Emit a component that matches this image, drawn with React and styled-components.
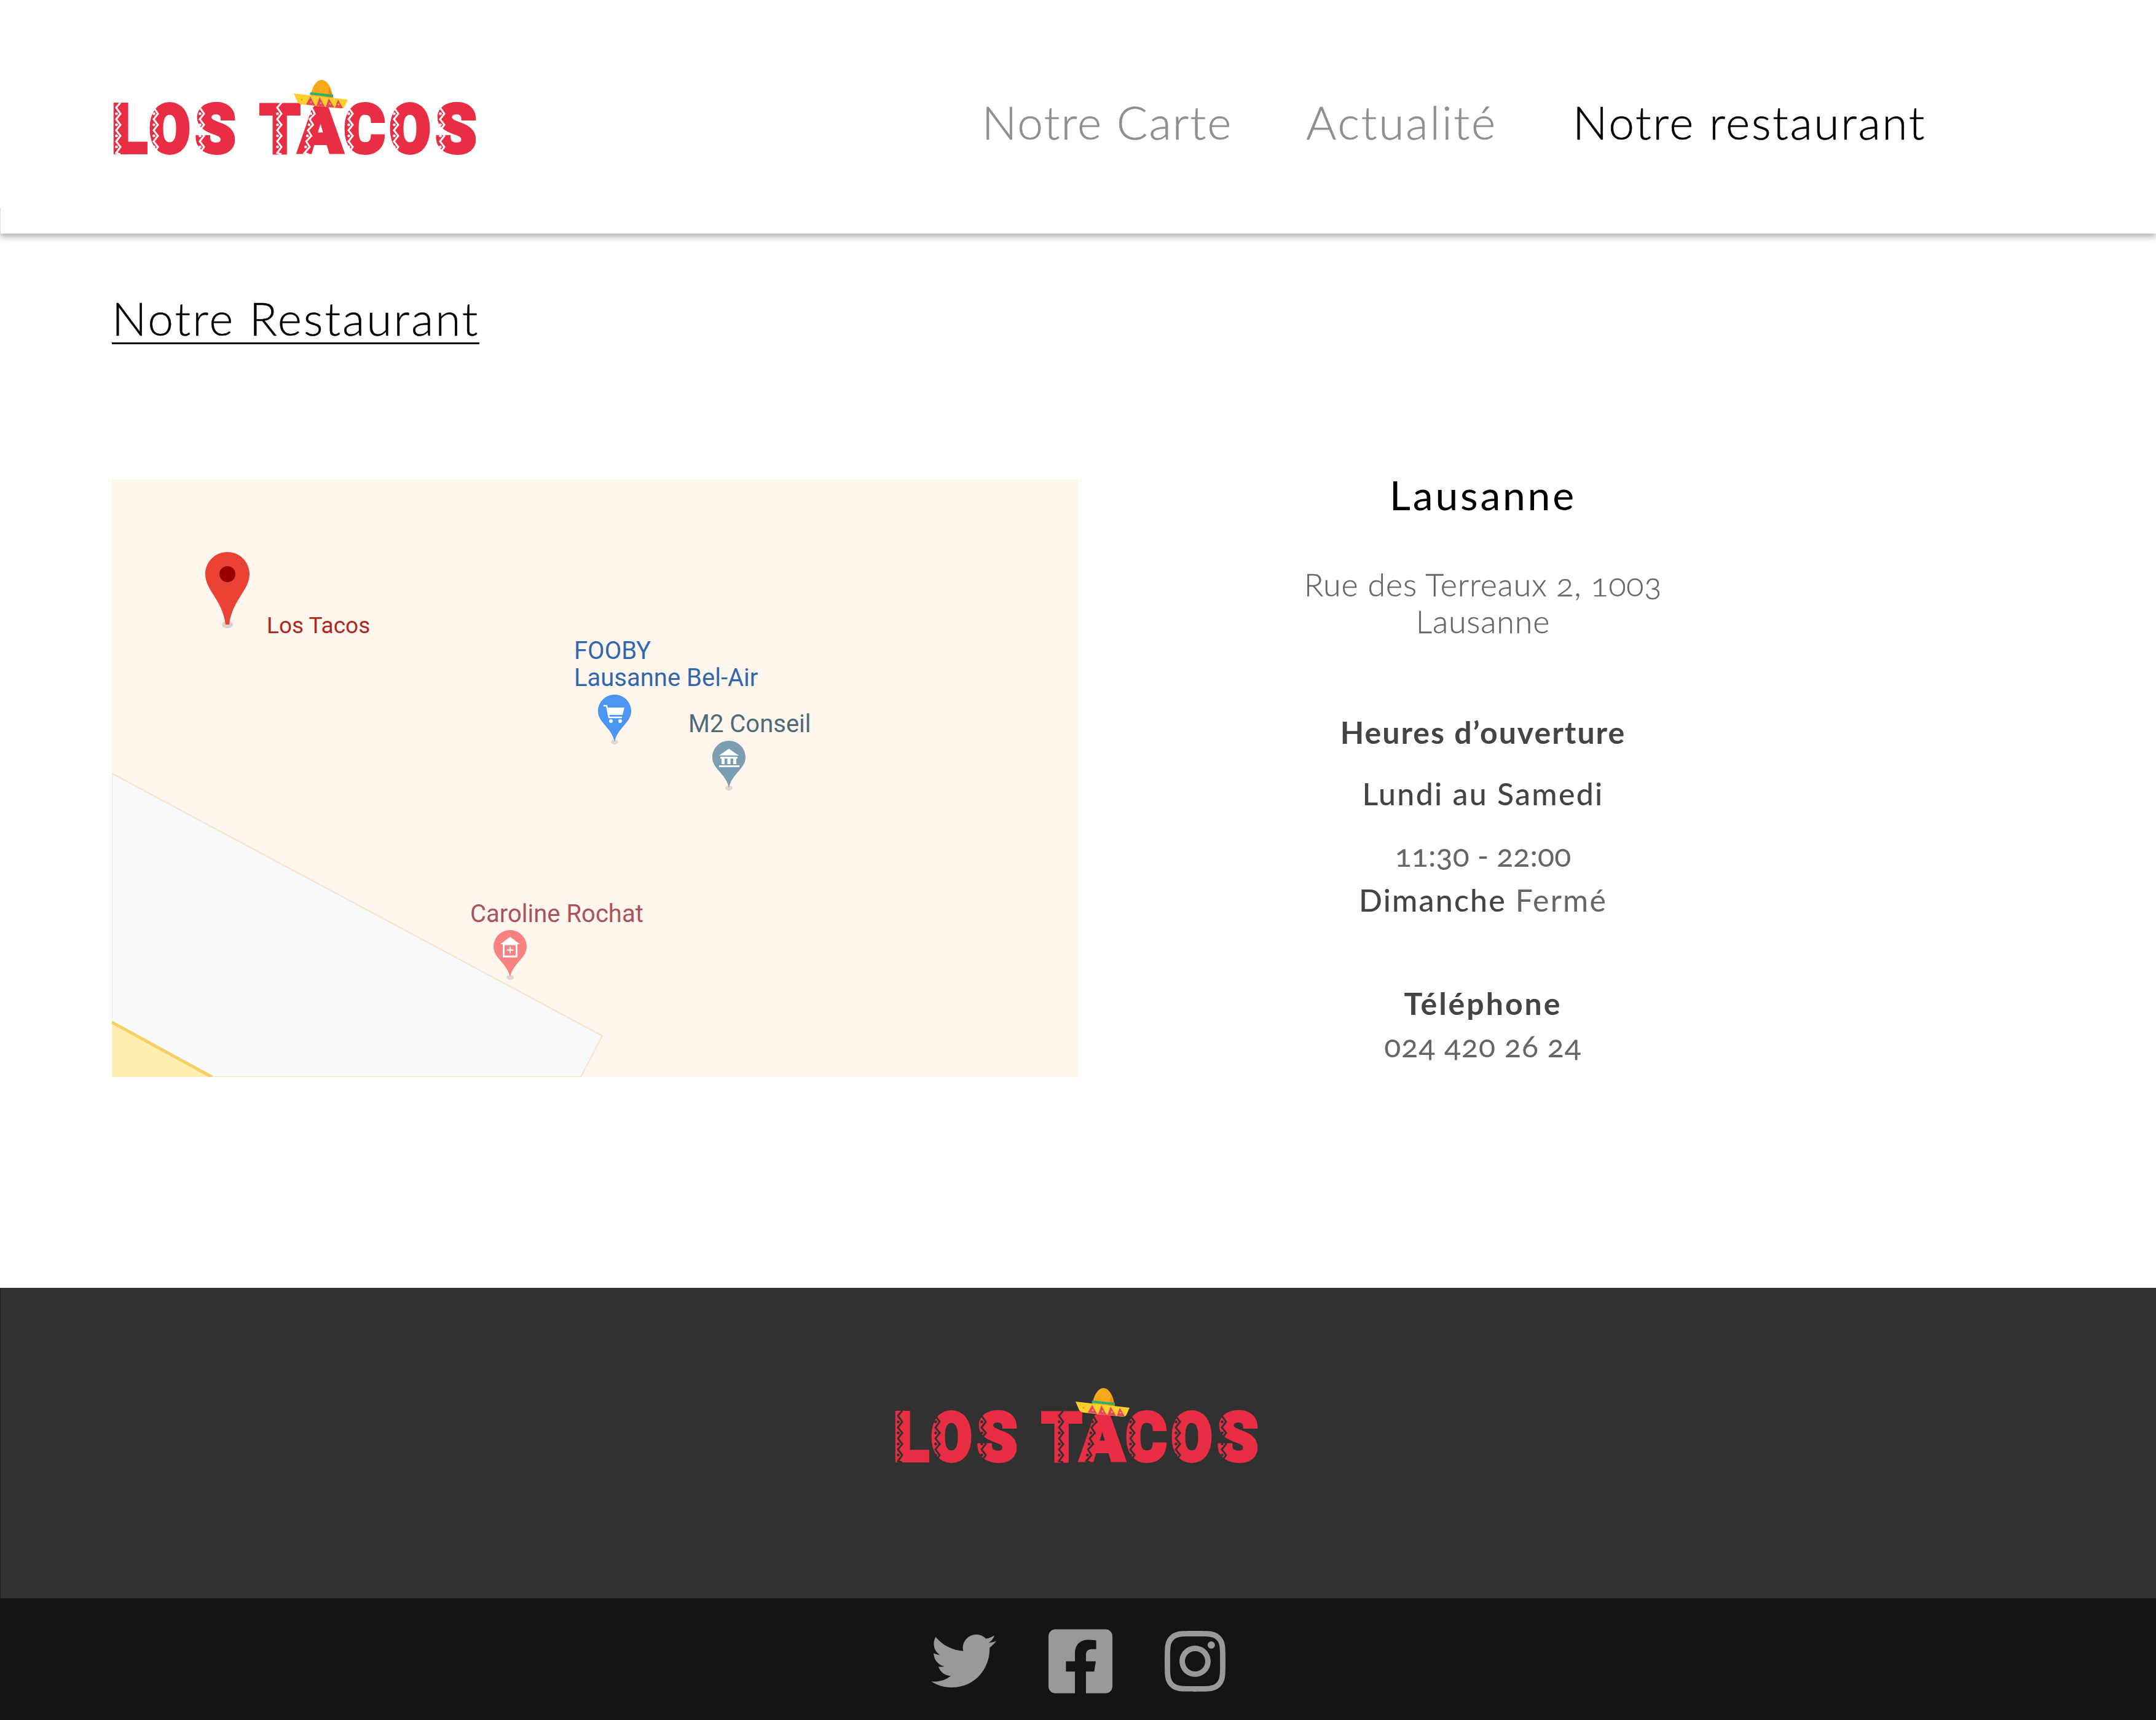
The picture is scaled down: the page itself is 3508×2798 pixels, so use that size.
import React from "react";
import styled, { createGlobalStyle } from "styled-components";
import { FaTwitter, FaFacebookSquare, FaInstagram } from "react-icons/fa";

const RED = "#e92d43";

const letters = [
  { ch: "L", x: 0, w: 57, zig: 7 },
  { ch: "O", x: 61, w: 66, zig: 68 },
  { ch: "S", x: 136, w: 65, zig: 143 },
  { ch: "T", x: 241, w: 65, zig: 269 },
  { ch: "A", x: 304, w: 71, zig: 326, slant: -13 },
  { ch: "C", x: 378, w: 66, zig: 385 },
  { ch: "O", x: 452, w: 66, zig: 459 },
  { ch: "S", x: 527, w: 66, zig: 534 },
];

const GlobalStyle = createGlobalStyle`
  html, body {
    margin: 0;
    padding: 0;
    background: #fff;
  }
  body {
    font-family: Lato, "Open Sans", sans-serif;
    font-feature-settings: "onum" 1;
  }
`;

const Page = styled.div`
  width: 3508px;
  height: 2798px;
  overflow: hidden;
  display: flex;
  flex-direction: column;
`;

const Header = styled.header`
  position: relative;
  z-index: 2;
  height: 380px;
  flex: none;
  padding: 0 374px 0 182px;
  box-sizing: border-box;
  display: flex;
  align-items: center;
  justify-content: space-between;
  background: #fff;
  box-shadow: 0 5px 10px rgba(0, 0, 0, 0.32);
  clip-path: inset(0 0 -30px 0);

  &::before {
    content: "";
    position: absolute;
    left: 0;
    bottom: 0;
    width: 1px;
    height: 42px;
    background: #ddd;
  }
`;

const Nav = styled.nav`
  display: flex;
  padding-top: 15px;
`;

const NavLink = styled.a`
  margin-left: ${({ $gap }) => $gap || 0}px;
  font-size: 75px;
  line-height: 90px;
  font-weight: 300;
  -webkit-text-stroke: 0.6px currentColor;
  letter-spacing: ${({ $spacing }) => $spacing}px;
  color: ${({ $active }) => ($active ? "#000" : "#8f8f8f")};
`;

const LogoSvg = styled.svg`
  display: block;
  width: 594px;
  height: 123px;
  flex: none;
  overflow: visible;
`;

const LogoLetter = styled.text`
  font-family: Roboto, "Liberation Sans", sans-serif;
  font-weight: 900;
  font-size: 110px;
  fill: ${RED};
  stroke: ${RED};
  stroke-width: 6px;
  stroke-linejoin: miter;
`;

const Main = styled.main`
  flex: 1;
  padding: 97px 0 0 182px;
`;

const Title = styled.h1`
  display: inline-block;
  margin: 0;
  font-size: 75px;
  line-height: 80px;
  font-weight: 300;
  -webkit-text-stroke: 0.4px currentColor;
  letter-spacing: 2.9px;
  color: #000;
  border-bottom: 3px solid #000;
`;

const Content = styled.section`
  display: flex;
  gap: 339px;
  margin-top: 220px;
`;

const MapBox = styled.div`
  position: relative;
  width: 1572px;
  height: 972px;
  flex: none;
  overflow: hidden;
  background: #fff6ee;
`;

const MapShapes = styled.svg`
  position: absolute;
  inset: 0;
  width: 100%;
  height: 100%;
`;

const PinMark = styled.svg`
  position: absolute;
  left: ${({ $left }) => $left}px;
  top: ${({ $top }) => $top}px;
  width: ${({ $w }) => $w}px;
  height: ${({ $h }) => $h}px;
`;

const MapLabel = styled.div`
  position: absolute;
  left: ${({ $left }) => $left}px;
  top: ${({ $top }) => $top}px;
  font-family: Roboto, "Liberation Sans", sans-serif;
  font-feature-settings: normal;
  font-size: ${({ $size }) => $size || 40}px;
  line-height: 44px;
  color: ${({ $color }) => $color};
  white-space: nowrap;
`;

const Info = styled.aside`
  width: 640px;
  flex: none;
  text-align: center;
`;

const City = styled.h2`
  margin: 0;
  font-size: 66px;
  line-height: 50px;
  font-weight: 400;
  letter-spacing: 3.8px;
  color: #000;
`;

const InfoLine = styled.p`
  margin: ${({ $top }) => $top}px 0 0;
  font-size: ${({ $size }) => $size || 50}px;
  line-height: ${({ $lh }) => $lh || 60}px;
  font-weight: ${({ $weight }) => $weight || 300};
  letter-spacing: ${({ $spacing }) => $spacing || 0}px;
  color: ${({ $weight }) => ($weight > 400 ? "#444" : "#666")};
  -webkit-text-stroke: ${({ $weight }) => ($weight ? 0 : 0.4)}px currentColor;
  white-space: nowrap;
`;

const Light = styled.span`
  font-weight: 400;
  color: #666;
`;

const LogoBand = styled.div`
  height: 505px;
  flex: none;
  padding: 162px 7px 0 0;
  box-sizing: border-box;
  display: flex;
  justify-content: center;
  background: #313131;
  border-left: 1px solid #242424;
`;

const SocialBar = styled.div`
  height: 198px;
  flex: none;
  padding-top: 6px;
  box-sizing: border-box;
  display: flex;
  align-items: center;
  justify-content: center;
  gap: 85px;
  background: #141414;
  color: #999;
`;

const TwitterIcon = styled(FaTwitter)`
  width: 106px;
  height: 106px;
`;

const FacebookIcon = styled(FaFacebookSquare)`
  width: 104px;
  height: 119px;
`;

const InstagramIcon = styled(FaInstagram)`
  width: 99px;
  height: 113px;
`;

const Zigzag = ({ x, slant = 0, color }) => {
  const ys = [0, 8, 18, 27, 36, 45, 54, 63, 72, 82, 84];
  const at = (y) => x + (slant * y) / 84;
  const points = ys
    .map((y, i) => `${at(y) + (i % 2 === 0 ? 7 : 0)},${y + 38}`)
    .join(" ");
  return (
    <g>
      <polyline points={points} fill="none" stroke={color} strokeWidth="3" />
      {[18, 36, 54, 72].map((y) => (
        <circle key={y} cx={at(y) + 0.5} cy={y + 38} r="2.3" fill={color} />
      ))}
    </g>
  );
};

const Hat = () => (
  <g>
    <path d="M322 36C323 18 331 1 341 1C352 1 360 18 360 38Z" fill="#f9a81a" />
    <path d="M353 12C357 18 360 27 360 38L344 36C350 30 354 22 353 12Z" fill="#f38b14" />
    <path d="M323 21L360 25L360 29L322 25Z" fill="#2fb06b" />
    <path d="M296 23L384 33L378 46Q376 48 371 47.500L310 41Q304 40 302 37Z" fill="#ffd02c" />
    <path d="M323 28L316 41L331 43Z" fill="#e8465f" />
    <path d="M338 29L333 43L347 45Z" fill="#e8465f" />
    <path d="M353 31L348 45L362 46Z" fill="#e8465f" />
    <path d="M368 33L363 46.500L376 47Z" fill="#e8465f" />
    <circle cx="309" cy="33" r="1.300" fill="#f58a1f" />
    <circle cx="324" cy="37" r="1.300" fill="#ffd02c" />
    <circle cx="340" cy="39" r="1.300" fill="#ffd02c" />
    <circle cx="355" cy="40" r="1.300" fill="#ffd02c" />
    <circle cx="369" cy="41" r="1.300" fill="#ffd02c" />
  </g>
);

const Logo = ({ cut }) => (
  <LogoSvg viewBox="0 0 594 123">
    {letters.map((l, i) => (
      <LogoLetter
        key={i}
        x={l.x}
        y={119}
        textLength={l.w}
        lengthAdjust="spacingAndGlyphs"
      >
        {l.ch}
      </LogoLetter>
    ))}
    {letters.map((l, i) => (
      <Zigzag key={i} x={l.zig} slant={l.slant} color={cut} />
    ))}
    <Hat />
  </LogoSvg>
);

const TEAR = "M27 0C12 0 0 12 0 27C0 46 23 54 27 77C31 54 54 46 54 27C54 12 42 0 27 0Z";

const SmallPin = ({ left, top, color, children }) => (
  <PinMark $left={left} $top={top} $w={54} $h={82} viewBox="0 0 54 82">
    <ellipse cx="27" cy="77" rx="6" ry="4" fill="rgba(0,0,0,0.12)" />
    <path d={TEAR} fill={color} />
    {children}
  </PinMark>
);

const App = () => (
  <Page>
    <GlobalStyle />
    <Header>
      <Logo cut="#fff" />
      <Nav>
        <NavLink $spacing={2.1}>Notre Carte</NavLink>
        <NavLink $gap={120} $spacing={2.9}>Actualité</NavLink>
        <NavLink $gap={123} $active $spacing={2.6}>Notre restaurant</NavLink>
      </Nav>
    </Header>
    <Main>
      <Title>Notre Restaurant</Title>
      <Content>
        <MapBox>
          <MapShapes viewBox="0 0 1572 972">
            <path d="M0 478L798 905L763 972H0Z" fill="#f8f9fa" stroke="#fde2c4" strokeWidth="2" />
            <path d="M0 883L163 972H0Z" fill="#feefb0" />
            <path d="M0 883L163 972" fill="none" stroke="#f6cf65" strokeWidth="5" />
          </MapShapes>
          <PinMark $left={152} $top={118} $w={72} $h={124} viewBox="0 0 72 124">
            <ellipse cx="36" cy="118" rx="9" ry="6" fill="rgba(0,0,0,0.14)" />
            <path d="M36 0C16 0 0 16 0 36C0 62 28 78 33 118H39C44 78 72 62 72 36C72 16 56 0 36 0Z" fill="#ea4335" />
            <ellipse cx="36" cy="36" rx="13" ry="13" fill="#980000" />
          </PinMark>
          <MapLabel $left={252} $top={216} $size={37} $color="#b3261e">Los Tacos</MapLabel>
          <MapLabel $left={752} $top={257} $color="#3367ab">
            FOOBY
            <br />
            Lausanne Bel-Air
          </MapLabel>
          <SmallPin left={791} top={350} color="#4b96f3">
            <path d="M9 18H14L18 37H39" fill="none" stroke="#fff" strokeWidth="2.500" />
            <path d="M16 21H43L40 33H18Z" fill="#fff" />
            <circle cx="21" cy="43" r="3" fill="#fff" />
            <circle cx="36" cy="43" r="3" fill="#fff" />
          </SmallPin>
          <MapLabel $left={938} $top={376} $color="#4f6b78">M2 Conseil</MapLabel>
          <SmallPin left={977} top={425} color="#7b9eb0">
            <path d="M27 13L43 24H11Z" fill="#fff" />
            <path d="M13 26H41V29H13ZM15 29H20V38H15ZM24.500 29H29.500V38H24.500ZM34 29H39V38H34ZM11 40H44V43H11Z" fill="#fff" />
          </SmallPin>
          <MapLabel $left={583} $top={685} $color="#a8535d">Caroline Rochat</MapLabel>
          <SmallPin left={621} top={733} color="#f88181">
            <path d="M27 11L43 23H11Z" fill="#fff" />
            <rect x="16.500" y="23" width="21" height="20" fill="none" stroke="#fff" strokeWidth="3" />
            <path d="M27 27V38M21.500 32.500H32.500" stroke="#fff" strokeWidth="2" />
          </SmallPin>
        </MapBox>
        <Info>
          <City>Lausanne</City>
          <InfoLine $top={90} $size={52} $lh={60} $spacing={0.85}>
            Rue des Terreaux 2, 1003
            <br />
            Lausanne
          </InfoLine>
          <InfoLine $top={121} $weight={700} $spacing={2}>Heures d’ouverture</InfoLine>
          <InfoLine $top={40} $weight={500} $spacing={2.3}>Lundi au Samedi</InfoLine>
          <InfoLine $top={40} $weight={400} $spacing={0.1}>11:30 - 22:00</InfoLine>
          <InfoLine $top={13} $weight={500} $spacing={2.2}>
            Dimanche <Light>Fermé</Light>
          </InfoLine>
          <InfoLine $top={108} $weight={700} $spacing={3}>Téléphone</InfoLine>
          <InfoLine $top={9} $weight={400} $spacing={1}>024 420 26 24</InfoLine>
        </Info>
      </Content>
    </Main>
    <LogoBand>
      <Logo cut="#313131" />
    </LogoBand>
    <SocialBar>
      <TwitterIcon />
      <FacebookIcon />
      <InstagramIcon />
    </SocialBar>
  </Page>
);

export default App;
